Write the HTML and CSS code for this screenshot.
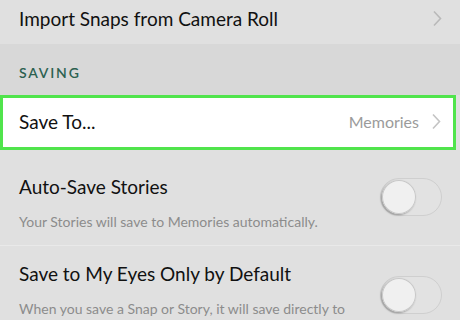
FILE: index.html
```html
<!DOCTYPE html>
<html lang="en">
<head>
  <meta charset="UTF-8">
  <title>Settings</title>
  <link rel="stylesheet" href="styles.css">
</head>
<body>
  <div class="settings">
    <div class="settings-row settings-row-top">
      <span class="settings-title">Import Snaps from Camera Roll</span>
      <svg class="settings-chevron" width="9" height="17" viewBox="0 0 9 17"><path d="M1 1.5 L7.5 8.5 L1 15.5" fill="none" stroke="#b9b9b9" stroke-width="1.6"/></svg>
    </div>

    <div class="settings-section">SAVING</div>

    <div class="settings-row settings-row-selected">
      <span class="settings-title">Save To...</span>
      <span class="settings-value">Memories</span>
      <svg class="settings-chevron" width="9" height="17" viewBox="0 0 9 17"><path d="M1 1.5 L7.5 8.5 L1 15.5" fill="none" stroke="#c4c4c4" stroke-width="1.6"/></svg>
    </div>

    <div class="settings-toggle-row">
      <div class="settings-toggle-text">
        <div class="settings-title">Auto-Save Stories</div>
        <div class="settings-desc">Your Stories will save to Memories automatically.</div>
      </div>
      <div class="settings-switch"><div class="settings-switch-knob"></div></div>
    </div>

    <div class="settings-toggle-row settings-toggle-row-last">
      <div class="settings-toggle-text">
        <div class="settings-title">Save to My Eyes Only by Default</div>
        <div class="settings-desc">When you save a Snap or Story, it will save directly to My Eyes Only.</div>
      </div>
      <div class="settings-switch"><div class="settings-switch-knob"></div></div>
    </div>
  </div>
</body>
</html>
```

FILE: styles.css
```css
body {
  margin: 0;
  font-family: Lato, "Open Sans", sans-serif;
  background: #e0e0e0;
  overflow: hidden;
}

.settings {
  width: 460px;
}

.settings-row {
  display: flex;
  align-items: center;
  padding: 0 18px 0 19px;
  background: #e0e0e0;
}

.settings-row-top {
  height: 44px;
  padding-bottom: 8px;
  box-sizing: border-box;
}

.settings-title {
  flex: 1;
  font-size: 19px;
  line-height: 23px;
  color: #111;
}

.settings-chevron {
  flex: none;
}

.settings-section {
  height: 51px;
  box-sizing: border-box;
  padding: 20px 0 0 19px;
  background: #d8d8d8;
  color: #2c6150;
  font-size: 14px;
  font-weight: 600;
  letter-spacing: 1.8px;
}

.settings-row-selected {
  height: 55px;
  box-sizing: border-box;
  margin-right: 4px;
  padding: 0 12px 2px 16px;
  background: #fff;
  border: 3px solid #50e44c;
}

.settings-value {
  margin-right: 13px;
  font-size: 16px;
  color: #9b9b9b;
}

.settings-toggle-row {
  display: flex;
  align-items: flex-start;
  padding: 25px 18px 13px 19px;
  border-bottom: 1px solid #e9e9e9;
}

.settings-toggle-row-last {
  padding-top: 16px;
  border-bottom: none;
}

.settings-toggle-text {
  flex: 1;
}

.settings-desc {
  margin-top: 14px;
  max-width: 340px;
  font-size: 14px;
  line-height: 20px;
  color: #8c8c8c;
}

.settings-switch {
  flex: none;
  width: 60px;
  height: 36px;
  margin-top: 3px;
  border: 1.5px solid #cfcfcf;
  border-radius: 20px;
  background: #e2e2e2;
}

.settings-toggle-row-last .settings-switch {
  margin-top: 14px;
}

.settings-switch-knob {
  width: 34px;
  height: 34px;
  margin: 0.5px;
  border-radius: 50%;
  background: #f0f0f0;
  box-shadow: -1px 1px 2px rgba(0, 0, 0, 0.35), inset 0 0 0 1px #c8c8c8;
}
```
